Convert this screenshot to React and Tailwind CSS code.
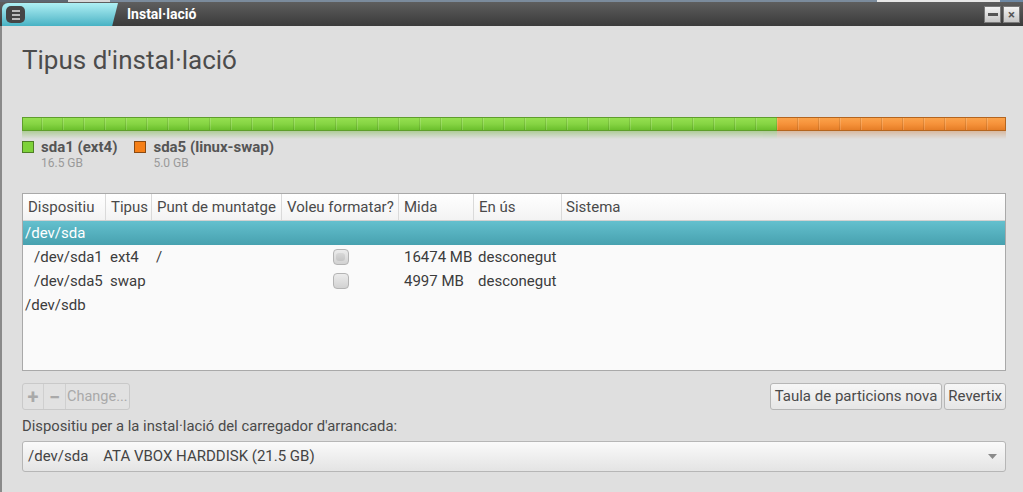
import React from 'react';

const cols = [
  { label: 'Dispositiu', w: 'w-[83px]' },
  { label: 'Tipus', w: 'w-[46px]' },
  { label: 'Punt de muntatge', w: 'w-[130px]' },
  { label: 'Voleu formatar?', w: 'w-[117px]' },
  { label: 'Mida', w: 'w-[75px]' },
  { label: 'En ús', w: 'w-[88px]' },
];

const rows = [
  { dev: '/dev/sda', selected: true },
  { dev: '/dev/sda1', indent: true, type: 'ext4', mount: '/', check: 'mixed', size: '16474 MB', used: 'desconegut' },
  { dev: '/dev/sda5', indent: true, type: 'swap', mount: '', check: 'off', size: '4997 MB', used: 'desconegut' },
  { dev: '/dev/sdb' },
];

function Checkbox({ mixed }) {
  return (
    <div className="w-[16px] h-[16px] rounded-[4px] border border-[#b4b4b4] bg-gradient-to-b from-[#ececec] to-[#d2d2d2] flex items-center justify-center">
      {mixed && <div className="w-[9px] h-[8px] rounded-[3px] bg-gradient-to-b from-[#d8d8d8] to-[#c4c4c4]" />}
    </div>
  );
}

function PartitionBar() {
  return (
    <div>
      <div className="relative flex h-[14px]">
        <div className="w-[755px] border-y border-l border-[#5f9e2c] bg-gradient-to-b from-[#95e050] via-[#86d443] to-[#6bbf2c]" />
        <div className="flex-1 border-y border-r border-[#b4651f] bg-gradient-to-b from-[#fba24a] via-[#f6923a] to-[#e57d26]" />
        <div className="absolute inset-y-[1px] inset-x-0 bg-[repeating-linear-gradient(90deg,transparent_0px,transparent_19px,rgba(0,0,0,0.1)_19px,rgba(0,0,0,0.1)_20px,rgba(255,255,255,0.15)_20px,rgba(255,255,255,0.15)_21px)]" />
      </div>
      {/* reflection */}
      <div className="flex h-[8px] opacity-60">
        <div className="w-[755px] bg-gradient-to-b from-[#8fbf6a] to-transparent" />
        <div className="flex-1 bg-gradient-to-b from-[#d3a27a] to-transparent" />
      </div>
    </div>
  );
}

export default function App() {
  return (
    <div className="w-[1023px] h-[492px] overflow-hidden flex flex-col bg-[#dfdfdf] text-[#3c3c3c]" style={{ fontFamily: 'Roboto, "Liberation Sans", sans-serif' }}>
      {/* desktop behind the window */}
      <div className="h-[2px] flex">
        <div className="w-[68px] bg-[#5d6670]" />
        <div className="w-[42px] bg-[#d8d8d8]" />
        <div className="flex-1 bg-[#7b8b9c]" />
        <div className="w-[123px] bg-[#e8e8e8]" />
        <div className="w-[23px] bg-[#6d88a4]" />
      </div>

      {/* title bar */}
      <div className="h-[24px] flex items-center bg-gradient-to-b from-[#5e5e5e] to-[#3b3b3b]">
        <div className="ml-[2px] w-[116px] h-[23px] self-end rounded-tl-[6px] bg-gradient-to-b from-[#aef0f4] to-[#46b2c4] [clip-path:polygon(0_0,100%_0,95%_100%,0_100%)] flex items-center pl-[4px]">
          <div className="w-[19px] h-[17px] rounded-[5px] bg-[#454545] flex flex-col items-center justify-center gap-[2px]">
            <div className="w-[8px] h-[2px] bg-[#bdbdbd]" />
            <div className="w-[8px] h-[2px] bg-[#bdbdbd]" />
            <div className="w-[8px] h-[2px] bg-[#bdbdbd]" />
          </div>
        </div>
        <div className="ml-[9px] text-white text-[14px] font-bold">Instal·lació</div>
        <div className="ml-auto mr-[3px] flex gap-[2px]">
          <div className="w-[17px] h-[17px] border border-[#7a7a7a] bg-gradient-to-b from-[#f4f4f4] to-[#c6c6c6] flex items-center justify-center">
            <div className="w-[10px] h-[3px] bg-[#555]" />
          </div>
          <div className="w-[17px] h-[17px] border border-[#7a7a7a] bg-gradient-to-b from-[#f4f4f4] to-[#c6c6c6] flex items-center justify-center text-[#555] text-[13px] font-bold leading-none">
            ×
          </div>
        </div>
      </div>

      {/* content */}
      <div className="flex-1 border-l-2 border-[#8a8a8a] pl-[20px] pr-[17px] flex flex-col">
        <h1 className="mt-[19px] text-[26px] leading-[30px] text-[#4c4c4c]">Tipus d'instal·lació</h1>

        <div className="mt-[42px]">
          <PartitionBar />
        </div>

        <div className="mt-[1px] flex gap-[17px]">
          <div className="flex gap-[7px]">
            <div className="mt-[1px] w-[12px] h-[12px] border border-[#4e7f25] bg-[#7ed23a]" />
            <div>
              <div className="text-[15px] leading-[14px] font-bold text-[#555]">sda1 (ext4)</div>
              <div className="mt-[3px] text-[12px] leading-[13px] text-[#9a9a9a]">16.5 GB</div>
            </div>
          </div>
          <div className="flex gap-[7px]">
            <div className="mt-[1px] w-[12px] h-[12px] border border-[#8a4a12] bg-[#f57f17]" />
            <div>
              <div className="text-[15px] leading-[14px] font-bold text-[#555]">sda5 (linux-swap)</div>
              <div className="mt-[3px] text-[12px] leading-[13px] text-[#9a9a9a]">5.0 GB</div>
            </div>
          </div>
        </div>

        {/* table */}
        <div className="mt-[23px] h-[178px] border border-[#a9a9a9] bg-[#fafafa] text-[15px]">
          <div className="h-[27px] flex border-b border-[#d2d2d2] bg-gradient-to-b from-[#ffffff] to-[#f3f3f3] text-[#4a4a4a]">
            {cols.map((c) => (
              <div key={c.label} className={`${c.w} border-r border-[#dadada] flex items-center pl-[5px] whitespace-nowrap overflow-hidden`}>
                {c.label}
              </div>
            ))}
            <div className="flex-1 flex items-center pl-[4px]">Sistema</div>
          </div>
          {rows.map((r) => (
            <div
              key={r.dev}
              className={`h-[24px] flex items-center ${r.selected ? 'bg-gradient-to-b from-[#64c0ce] to-[#47a1af] text-white' : ''}`}
            >
              <div className={`w-[83px] whitespace-nowrap ${r.indent ? 'pl-[11px]' : 'pl-[2px]'}`}>{r.dev}</div>
              <div className="w-[46px] pl-[4px]">{r.type}</div>
              <div className="w-[130px] pl-[4px]">{r.mount}</div>
              <div className="w-[117px] flex justify-center">
                {r.check && <Checkbox mixed={r.check === 'mixed'} />}
              </div>
              <div className="w-[75px] pl-[5px] whitespace-nowrap">{r.size}</div>
              <div className="w-[88px] pl-[4px]">{r.used}</div>
            </div>
          ))}
        </div>

        {/* buttons */}
        <div className="mt-[12px] flex justify-between">
          <div className="h-[27px] flex rounded-[3px] border border-[#c9c9c9] bg-[#e1e1e1] text-[#a9a9a9] text-[14.5px]">
            <div className="w-[21px] flex items-center justify-center border-r border-[#cfcfcf] text-[20px] font-bold leading-none">+</div>
            <div className="w-[22px] flex items-center justify-center border-r border-[#cfcfcf] text-[20px] font-bold leading-none">−</div>
            <div className="pl-[1px] pr-[1px] flex items-center">Change...</div>
          </div>
          <div className="flex gap-[2px]">
            <button className="h-[27px] px-[4px] rounded-[3px] border border-[#b6b6b6] bg-gradient-to-b from-[#f6f6f6] to-[#e6e6e6] text-[15px] text-[#4a4a4a]">
              Taula de particions nova
            </button>
            <button className="h-[27px] px-[3px] rounded-[3px] border border-[#b6b6b6] bg-gradient-to-b from-[#f6f6f6] to-[#e6e6e6] text-[15px] text-[#4a4a4a]">
              Revertix
            </button>
          </div>
        </div>

        <div className="mt-[8px] text-[14.8px] leading-[17px] text-[#4a4a4a]">
          Dispositiu per a la instal·lació del carregador d'arrancada:
        </div>

        <div className="mt-[6px] h-[31px] flex items-center rounded-[3px] border border-[#b6b6b6] bg-gradient-to-b from-[#fafafa] to-[#e4e4e4] px-[5px] text-[15px] text-[#444]">
          <span className="whitespace-pre">/dev/sda    ATA VBOX HARDDISK (21.5 GB)</span>
          <svg className="ml-auto mr-[3px]" width="9" height="5" viewBox="0 0 9 5">
            <path d="M0 0 L9 0 L4.5 5 Z" fill="#8a8a8a" />
          </svg>
        </div>
      </div>
    </div>
  );
}
